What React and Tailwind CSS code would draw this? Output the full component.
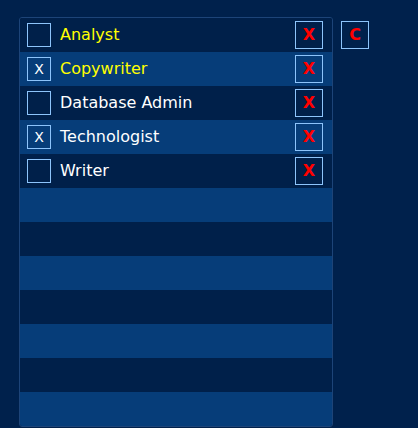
import { useState } from "react";

const initial = [
  { name: "Analyst", checked: false, highlight: true },
  { name: "Copywriter", checked: true, highlight: true },
  { name: "Database Admin", checked: false, highlight: false },
  { name: "Technologist", checked: true, highlight: false },
  { name: "Writer", checked: false, highlight: false },
];

export default function App() {
  const [items, setItems] = useState(initial);
  const rows = Array.from({ length: 12 }, (_, i) => items[i] || null);

  const toggle = (i) =>
    setItems((prev) => prev.map((it, j) => (j === i ? { ...it, checked: !it.checked } : it)));
  const remove = (i) => setItems((prev) => prev.filter((_, j) => j !== i));

  return (
    <div className="min-h-screen bg-[#00214c] font-['DejaVu_Sans',sans-serif]">
      <div className="flex items-start pl-[19px] pt-[17px]">
        <div className="w-[314px] overflow-hidden rounded-[3px] border border-[#1d4478]">
          {rows.map((item, i) => (
            <div
              key={i}
              className={`flex h-[34px] items-center pl-[7px] pr-[9px] ${
                i % 2 === 0 ? "bg-[#00204a]" : "bg-[#063d79]"
              }`}
            >
              {item && (
                <>
                  <button
                    onClick={() => toggle(i)}
                    className="flex h-[24px] w-[24px] items-center justify-center border border-[#8dc4fb] text-[14px] leading-none text-white"
                  >
                    {item.checked ? "X" : ""}
                  </button>
                  <span
                    className={`ml-[9px] flex-1 text-[16px] ${
                      item.highlight ? "text-[#ffff00]" : "text-white"
                    }`}
                  >
                    {item.name}
                  </span>
                  <button
                    onClick={() => remove(i)}
                    className="flex h-[28px] w-[28px] items-center justify-center border border-[#8dc4fb] text-[16px] font-bold leading-none text-[#ff0000]"
                  >
                    X
                  </button>
                </>
              )}
            </div>
          ))}
        </div>
        <button className="ml-[8px] mt-[4px] flex h-[28px] w-[28px] items-center justify-center border border-[#8dc4fb] text-[16px] font-bold leading-none text-[#ff0000]">
          C
        </button>
      </div>
    </div>
  );
}
